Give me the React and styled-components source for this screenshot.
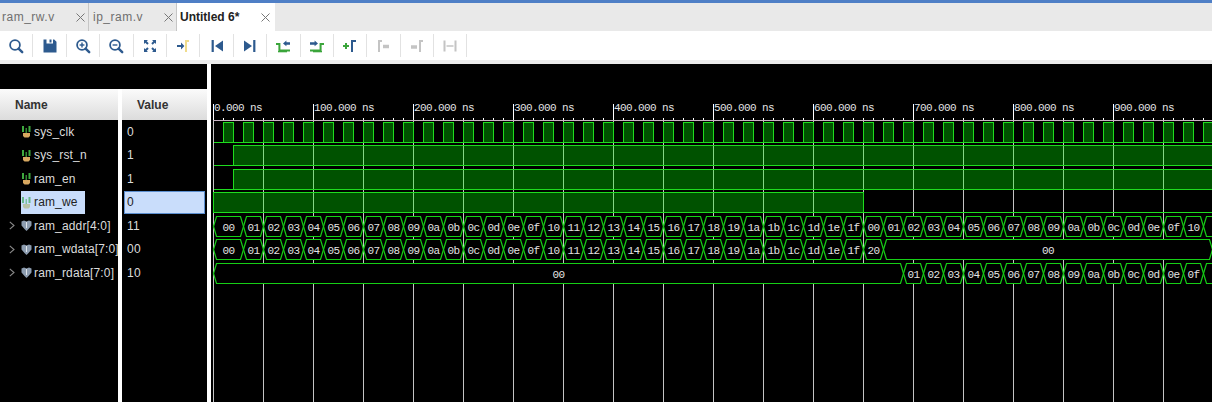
import React from 'react'
import styled, { createGlobalStyle } from 'styled-components'

const Global = createGlobalStyle`
    html, body { margin:0; padding:0; background:#fff; }
    body { font-family:"Liberation Sans", Arial, sans-serif; }
`
const Page = styled.div`
    width:1212px;
    height:402px;
    display:flex;
    flex-direction:column;
    overflow:hidden;
    background:#fff;
    border-top:3px solid #4f7fc6;
    box-sizing:border-box;
`
const TabBar = styled.div`
    height:28px;
    flex:none;
    display:flex;
    background:#e9e9e9;
`
const Tab = styled.div`
    width:${p => p.$w}px;
    box-sizing:border-box;
    display:flex;
    align-items:center;
    justify-content:space-between;
    padding:0 ${p => p.$active ? 5 : 3}px 0 ${p => p.$pad}px;
    font-size:12px;
    letter-spacing:${p => p.$active ? '0' : '.5px'};
    font-weight:${p => p.$active ? 700 : 400};
    color:${p => p.$active ? '#222' : '#6f6f6f'};
    background:${p => p.$active ? '#fff' : 'transparent'};
    border-right:${p => p.$active ? 'none' : '1px solid #c6c6c6'};
`
const Toolbar = styled.div`
    height:29px;
    flex:none;
    box-sizing:border-box;
    display:flex;
    align-items:center;
    background:#fff;
`
const ToolbarEdge = styled.div`
    height:4px;
    flex:none;
    background:#ececec;
`
const ToolButton = styled.div`
    width:33.4px;
    height:23px;
    flex:none;
    box-sizing:border-box;
    display:flex;
    align-items:center;
    justify-content:center;
    border-right:1px solid #e2e2e2;
`
const Panes = styled.div`
    flex:1;
    display:flex;
    min-height:0;
`
const Column = styled.div`
    width:${p => p.$w}px;
    flex:none;
    margin-right:4px;
    background:#000;
    display:flex;
    flex-direction:column;
`
const TopGap = styled.div`
    height:25px;
    flex:none;
    background:#000;
    margin-right:${p => p.$bridge ? -4 : 0}px;
`
const Head = styled.div`
    height:31px;
    flex:none;
    display:flex;
    align-items:center;
    padding-left:${p => p.$pad}px;
    font-size:12px;
    font-weight:700;
    color:#333;
    background:linear-gradient(#fbfbfb, #dcdcdc);
`
const Row = styled.div`
    height:23.5px;
    flex:none;
    display:flex;
    align-items:center;
    font-size:12px;
    color:#dcdcdc;
`
const Chevron = styled.span`
    width:21px;
    flex:none;
    display:flex;
    justify-content:flex-end;
    padding-right:6px;
    box-sizing:border-box;
`
const NameCell = styled.div`
    height:23px;
    display:flex;
    align-items:center;
    gap:2px;
    letter-spacing:.15px;
    padding-right:${p => p.$selected ? 7 : 0}px;
    white-space:nowrap;
    background:${p => p.$selected ? '#c9ddfb' : 'transparent'};
    color:${p => p.$selected ? '#222' : 'inherit'};
`
const ValueCell = styled.div`
    margin-left:2px;
    width:81px;
    height:23px;
    box-sizing:border-box;
    display:flex;
    align-items:center;
    padding-left:2px;
    letter-spacing:.3px;
    background:${p => p.$selected ? '#c9ddfb' : 'transparent'};
    border:1px solid ${p => p.$selected ? '#5c8fd0' : 'transparent'};
    color:${p => p.$selected ? '#222' : 'inherit'};
`
const Wave = styled.svg`
    display:block;
    width:1001px;
    height:338px;
    flex:none;
    background:#000;
`
const WaveText = styled.text`
    font-family:"Liberation Mono", monospace;
    font-size:11px;
    letter-spacing:-.6px;
    fill:#e8e8e8;
    opacity:.98;
`

const NAVY = '#2d5a8e'
const GREEN = '#3ba53b'
const YELLOW = '#f0dc8c'
const OFF = '#c4c4c4'

const Icon = ({ children }) => <svg width="18" height="18" viewBox="0 0 18 18">{children}</svg>

const Lens = ({ mark }) => (
    <Icon>
        <circle cx="8" cy="8" r="4.9" fill="none" stroke={NAVY} strokeWidth="1.8" />
        <path d="M11.6 11.6L15.2 15.2" stroke={NAVY} strokeWidth="2.4" strokeLinecap="round" />
        {mark && <path d="M5.6 8h4.8" stroke={NAVY} strokeWidth="1.4" />}
        {mark === 'plus' && <path d="M8 5.6v4.8" stroke={NAVY} strokeWidth="1.4" />}
    </Icon>
)

const TOOLS = [
    <Lens key="find" />,
    <Icon key="save"><path d="M2.5 2.5h3v4h6.5v-4h1.2l2.3 2.3v10.7h-13z" fill={NAVY} /><path d="M8.5 2.5h2v3h-2z" fill={NAVY} /></Icon>,
    <Lens key="in" mark="plus" />,
    <Lens key="out" mark="minus" />,
    <Icon key="fit"><path d="M3 3h4l-1.3 1.3 2 2-1.4 1.4-2-2L3 7zM15 3v4l-1.3-1.3-2 2-1.4-1.4 2-2L11 3zM3 15v-4l1.3 1.3 2-2 1.4 1.4-2 2L7 15zM15 15h-4l1.3-1.3-2-2 1.4-1.4 2 2L15 11z" fill={NAVY} /></Icon>,
    <Icon key="cursor"><path d="M3 8h4V5.6L10.4 9 7 12.4V10H3z" fill={NAVY} /><path d="M12 15V4h3" fill="none" stroke={YELLOW} strokeWidth="2" /></Icon>,
    <Icon key="first"><path d="M3.6 3h2.2v12H3.6zM15 3.4v11.2L7 9z" fill={NAVY} /></Icon>,
    <Icon key="last"><path d="M12.2 3h2.2v12h-2.2zM3 3.4v11.2L11 9z" fill={NAVY} /></Icon>,
    <Icon key="prev"><path d="M2 7h3.4v6.5H16" fill="none" stroke={GREEN} strokeWidth="2" /><path d="M4 14.6h9" stroke={GREEN} strokeWidth="1.4" /><path d="M9 6.4l3.4-2.9v1.7H16v2.5h-3.6v1.6z" fill={NAVY} /></Icon>,
    <Icon key="next"><path d="M16 7h-3.4v6.5H2" fill="none" stroke={GREEN} strokeWidth="2" /><path d="M5 14.6h9" stroke={GREEN} strokeWidth="1.4" /><path d="M10 6.4L6.6 3.500v1.700H2v2.500h4.600v1.600z" fill={NAVY} /></Icon>,
    <Icon key="add"><path d="M2 9h6M5 6v6" stroke={GREEN} strokeWidth="2" /><path d="M11 15V4h4" fill="none" stroke={NAVY} strokeWidth="2" /></Icon>,
    <Icon key="c1"><path d="M5 15V4h3" fill="none" stroke={OFF} strokeWidth="2" /><path d="M9 9.500h6" stroke={OFF} strokeWidth="3.500" /></Icon>,
    <Icon key="c2"><path d="M3 10h6" stroke={OFF} strokeWidth="3.500" /><path d="M12 15V4h3" fill="none" stroke={OFF} strokeWidth="2" /></Icon>,
    <Icon key="c3"><path d="M3.500 3.500v11M14.500 3.500v11" stroke={OFF} strokeWidth="2" /><path d="M5.500 9h7" stroke={OFF} strokeWidth="1.500" /></Icon>,
]

const CloseMark = () => (
    <svg width="9" height="9" viewBox="0 0 9 9">
        <path d="M.5.5l8 8M8.500.5l-8 8" stroke="#777" strokeWidth="1" />
    </svg>
)

const BitIcon = ({ selected }) => (
    <svg width="11" height="13" viewBox="0 0 11 13">
        <path d="M2 1v6M8.500 1v6" stroke={selected ? '#68b98a' : '#3ea93e'} strokeWidth="2" />
        <path d="M5.200 3v5" stroke={selected ? '#68b98a' : '#3ea93e'} strokeWidth="1.200" />
        <path d="M2 8h7v3l-1.500 1.500h-4L2 11z" fill={selected ? '#b8c4a8' : '#d8a860'} />
    </svg>
)

const BusIcon = () => (
    <svg width="11" height="13" viewBox="0 0 11 13">
        <path d="M.5 2.500l2.500-1 2.500 1 2.500-1 2.500 1v4L7.500 10l-2 2-2-2-3-3.500z" fill="#8d9db0" />
        <path d="M5.500 3v6" stroke="#dfe5ec" strokeWidth="1" />
    </svg>
)

const Expand = () => (
    <svg width="6" height="9" viewBox="0 0 6 9">
        <path d="M.8.8L5 4.500.8 8.200" fill="none" stroke="#8a8a8a" strokeWidth="1.100" />
    </svg>
)

const SIGNALS = [
    { name: 'sys_clk', value: '0' },
    { name: 'sys_rst_n', value: '1' },
    { name: 'ram_en', value: '1' },
    { name: 'ram_we', value: '0', selected: true },
    { name: 'ram_addr[4:0]', value: '11', bus: true },
    { name: 'ram_wdata[7:0]', value: '00', bus: true },
    { name: 'ram_rdata[7:0]', value: '10', bus: true },
]

const X0 = 213
const XEND = 1214
const LINE = '#1fdc1f'
const BUSLINE = '#16cf16'
const hex = n => n.toString(16).padStart(2, '0')
const range = (from, to, step) => {
    const out = []
    for (let v = from; v <= to; v += step) out.push(v)
    return out
}

// counts up from the given start, one step per clock
const counting = (startX, first, endX, wrapAt) => {
    const segs = []
    let n = first
    for (let x = startX; x < endX; x += 20) {
        segs.push({ a: x, b: x + 20, t: hex(wrapAt ? n % wrapAt : n) })
        n++
    }
    return segs
}

const ADDR = [{ a: X0, b: 243, t: '00' }, ...counting(243, 1, 1223, 32)]
const WDATA = [{ a: X0, b: 243, t: '00' }, ...counting(243, 1, 883), { a: 883, b: 1212, t: '00' }]
const RDATA = [{ a: X0, b: 903, t: '00' }, ...counting(903, 1, 1223)]

const Bit = ({ top, high }) => {
    const y1 = top
    const y0 = top + 20
    const fill = high.map(([a, b]) => `M${a} ${y1}H${b}V${y0}H${a}Z`).join('')
    const pulses = high.map(([a, b]) => `M${a} ${y0}V${y1}H${b}V${y0}`).join('')
    return (
        <g shapeRendering="crispEdges">
            <path d={fill} fill="#00ff00" opacity=".32" />
            <path d={`M${X0} ${y0}H${XEND}${pulses}`} fill="none" stroke={LINE} strokeWidth="1" />
        </g>
    )
}

const Bus = ({ top, segs }) => (
    <g>
        {segs.map(s => {
            const mid = top + 10
            const bot = top + 20
            const points = `${s.a},${mid} ${s.a + 3},${top} ${s.b - 3},${top} ${s.b},${mid} ${s.b - 3},${bot} ${s.a + 3},${bot}`
            // a bus value cut by the right edge shows no label
            const labelled = s.b <= 1212
            return (
                <g key={s.a}>
                    <polygon points={points} fill="#000" stroke={BUSLINE} strokeWidth="1.200" />
                    {labelled && <WaveText x={(s.a + s.b) / 2} y={top + 14} textAnchor="middle">{s.t}</WaveText>}
                </g>
            )
        })}
    </g>
)

const ClockHigh = range(223, 1212, 20).map(x => [x, x + 10])

export default function App() {
    return (
        <Page>
            <Global />
            <TabBar>
                <Tab $w={89} $pad={2}>ram_rw.v<CloseMark /></Tab>
                <Tab $w={88} $pad={4}>ip_ram.v<CloseMark /></Tab>
                <Tab $w={98} $pad={3} $active>Untitled 6*<CloseMark /></Tab>
            </TabBar>
            <Toolbar>
                {TOOLS.map(tool => <ToolButton key={tool.key}>{tool}</ToolButton>)}
            </Toolbar>
            <ToolbarEdge />
            <Panes>
                <Column $w={118}>
                    <TopGap $bridge />
                    <Head $pad={15}>Name</Head>
                    {SIGNALS.map(s => (
                        <Row key={s.name}>
                            <Chevron>{s.bus && <Expand />}</Chevron>
                            <NameCell $selected={s.selected}>
                                {s.bus ? <BusIcon /> : <BitIcon selected={s.selected} />}
                                {s.name}
                            </NameCell>
                        </Row>
                    ))}
                </Column>
                <Column $w={85}>
                    <TopGap />
                    <Head $pad={15}>Value</Head>
                    {SIGNALS.map(s => (
                        <Row key={s.name}>
                            <ValueCell $selected={s.selected}>{s.value}</ValueCell>
                        </Row>
                    ))}
                </Column>
                <Wave viewBox="211 64 1001 338">
                    <g shapeRendering="crispEdges">
                        {range(X0, 1212, 50).map(x => (
                            <path key={x} d={`M${x + .5} 120V402`} stroke="#c4c4c4" strokeWidth="1" />
                        ))}
                        <path d="M213 120.500H1212" stroke="#c9b4c4" strokeWidth="1" />
                        {range(X0, 1212, 10).map(x => (
                            <path key={x} d={`M${x + .5} 118V120`} stroke="#fff" strokeWidth="1" />
                        ))}
                        {range(X0, 1212, 100).map(x => (
                            <path key={x} d={`M${x + .5} 104V120`} stroke="#fff" strokeWidth="1" />
                        ))}
                    </g>
                    {range(0, 900, 100).map(t => (
                        <WaveText key={t} x={X0 + t + 1} y={111}>{t}.000 ns</WaveText>
                    ))}
                    <g transform="translate(.5 .5)">
                        <Bit top={122} high={ClockHigh} />
                        <Bit top={145} high={[[233, XEND]]} />
                        <Bit top={169} high={[[233, XEND]]} />
                        <Bit top={192} high={[[X0, 863]]} />
                        <Bus top={216} segs={ADDR} />
                        <Bus top={239} segs={WDATA} />
                        <Bus top={263} segs={RDATA} />
                    </g>
                </Wave>
            </Panes>
        </Page>
    )
}
